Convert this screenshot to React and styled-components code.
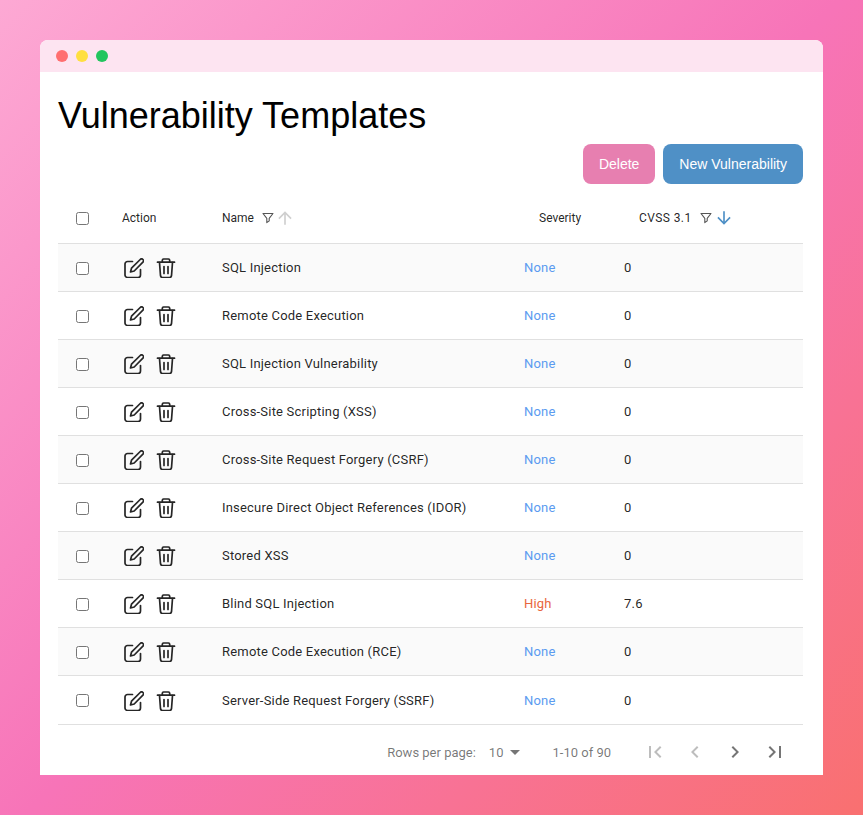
import React from "react";
import styled, { createGlobalStyle } from "styled-components";

const Global = createGlobalStyle`
  html, body { margin: 0; padding: 0; height: 100%; }
  * { box-sizing: border-box; }
`;

const Page = styled.div`
  width: 863px;
  height: 815px;
  padding: 40px;
  overflow: hidden;
  background: linear-gradient(135deg, #fda9d4 0%, #f774b8 50%, #f97070 100%);
  font-family: Roboto, sans-serif;
`;
const Win = styled.div`
  width: 783px;
  height: 735px;
  background: #fff;
  border-radius: 8px 8px 0 0;
  overflow: hidden;
`;
const TitleBar = styled.div`
  height: 32px;
  background: #fde4f1;
  display: flex;
  align-items: center;
  gap: 8px;
  padding-left: 16px;
`;
const Dot = styled.span`
  width: 12px;
  height: 12px;
  border-radius: 50%;
  background: ${(p) => p.$c};
`;
const Content = styled.div`
  padding: 0 20px 0 18px;
`;
const Title = styled.h1`
  margin: 0;
  padding-top: 23px;
  height: 72px;
  font: 400 36px/41px "Liberation Sans", Arial, sans-serif;
  color: #000;
`;
const Actions = styled.div`
  display: flex;
  justify-content: flex-end;
  gap: 8px;
  height: 40px;
`;
const Btn = styled.button`
  height: 40px;
  padding: 0 16px;
  border: 0;
  border-radius: 8px;
  background: ${(p) => p.$bg};
  color: #fff;
  font: 400 14px "Liberation Sans", Arial, sans-serif;
`;
const Row = styled.div`
  display: grid;
  grid-template-columns: 64px 100px 302px 100px 1fr;
  align-items: center;
  height: ${(p) => p.$h || 48}px;
  padding-top: ${(p) => p.$h - 48 || 0}px;
  background: ${(p) => (p.$shade ? "#fafafa" : "#fff")};
  border-bottom: 1px solid #e0e0e0;
  font-size: 13px;
  letter-spacing: 0.2px;
  color: rgba(0, 0, 0, 0.87);
`;
const Head = styled(Row)`
  height: 60px;
  padding-top: 8px;
  letter-spacing: 0;
`;
const HeadCell = styled.div`
  display: flex;
  align-items: center;
  padding-left: ${(p) => p.$pad || 0}px;
  white-space: nowrap;
  font-size: 12px;
  letter-spacing: ${(p) => p.$track || 0}px;
  color: rgba(0, 0, 0, 0.87);
`;
const Box = styled.span`
  display: block;
  width: 13px;
  height: 13px;
  margin-left: 18px;
  margin-top: ${(p) => (p.$flush ? 0 : 2)}px;
  border: 1px solid #767676;
  border-radius: 2.5px;
  background: #fff;
`;
const IconGroup = styled.div`
  display: flex;
  align-items: center;
  gap: 12px;
  padding-left: 2px;
`;
const ActionIcon = styled.svg`
  width: ${(p) => p.$w}px;
  height: 20px;
  fill: none;
  stroke: #262626;
  stroke-width: 1.7;
  stroke-linecap: round;
  stroke-linejoin: round;
`;
const FilterIcon = styled.svg`
  width: 12px;
  height: 12px;
  margin-left: 8px;
  fill: none;
  stroke: #555;
  stroke-width: 1.1;
`;
const SortIcon = styled.svg`
  width: 20px;
  height: 20px;
  margin-left: ${(p) => p.$gap}px;
  fill: ${(p) => p.$c};
`;
const Severity = styled.div`
  color: ${(p) => p.$c};
`;
const Footer = styled.div`
  display: flex;
  align-items: center;
  justify-content: flex-end;
  height: 50px;
  padding-top: 4px;
  font-size: 13px;
  color: rgba(0, 0, 0, 0.54);
`;
const RowsValue = styled.span`
  margin-left: 13px;
`;
const Caret = styled.svg`
  width: 24px;
  height: 24px;
  fill: rgba(0, 0, 0, 0.54);
`;
const Range = styled.span`
  margin-left: 25px;
  margin-right: 32px;
`;
const Pager = styled.div`
  display: flex;
  gap: 16px;
  padding-right: 8px;
  margin-right: 8px;
`;
const PageIcon = styled.svg`
  width: 24px;
  height: 24px;
  fill: ${(p) => (p.$off ? "rgba(0,0,0,0.26)" : "rgba(0,0,0,0.54)")};
`;

const rows = [
  ["SQL Injection", "None", "0"],
  ["Remote Code Execution", "None", "0"],
  ["SQL Injection Vulnerability", "None", "0"],
  ["Cross-Site Scripting (XSS)", "None", "0"],
  ["Cross-Site Request Forgery (CSRF)", "None", "0"],
  ["Insecure Direct Object References (IDOR)", "None", "0"],
  ["Stored XSS", "None", "0"],
  ["Blind SQL Injection", "High", "7.6"],
  ["Remote Code Execution (RCE)", "None", "0"],
  ["Server-Side Request Forgery (SSRF)", "None", "0"],
];

const Filter = () => (
  <FilterIcon viewBox="0 0 12 12">
    <path d="M1 1.5h10L7.2 6.3v2.6L4.8 10.6V6.3z" strokeLinejoin="round" />
  </FilterIcon>
);

const EditIcon = () => (
  <ActionIcon $w={20} viewBox="0 0 20 20">
    <path d="M8.5 3.5H3.5A2.5 2.5 0 0 0 1 6v11a2.5 2.5 0 0 0 2.5 2.5H14a2.5 2.5 0 0 0 2.5-2.5v-5.5" />
    <path d="M6.5 14l1-3.8L16.2 1.5a1.9 1.9 0 0 1 2.7 2.7L10.2 13z" />
  </ActionIcon>
);

const TrashIcon = () => (
  <ActionIcon $w={20} viewBox="0 0 20 20">
    <path d="M1.5 4.2h17" />
    <path d="M6.3 4V2.2A1.3 1.3 0 0 1 7.5 1h5a1.3 1.3 0 0 1 1.2 1.2V4" />
    <path d="M3.5 4.5l1 13.2a2 2 0 0 0 2 1.8h7a2 2 0 0 0 2-1.8l1-13.2" />
    <path d="M8 8.5v7M12 8.5v7" />
  </ActionIcon>
);

export default function App() {
  return (
    <Page>
      <Global />
      <Win>
        <TitleBar>
          <Dot $c="#ff6f70" />
          <Dot $c="#ffdf40" />
          <Dot $c="#22c55e" />
        </TitleBar>
        <Content>
          <Title>Vulnerability Templates</Title>
          <Actions>
            <Btn $bg="#e77fb0">Delete</Btn>
            <Btn $bg="#4f90c6">New Vulnerability</Btn>
          </Actions>
          <Head>
            <Box />
            <HeadCell>Action</HeadCell>
            <HeadCell>
              Name
              <Filter />
              <SortIcon viewBox="0 0 24 24" $c="#cfcfcf" $gap={1}>
                <path d="M4 12l1.41 1.41L11 7.83V20h2V7.83l5.58 5.59L20 12l-8-8-8 8z" />
              </SortIcon>
            </HeadCell>
            <HeadCell $pad={15}>Severity</HeadCell>
            <HeadCell $pad={15} $track={0.4}>
              CVSS 3.1
              <Filter />
              <SortIcon viewBox="0 0 24 24" $c="#4f90c6" $gap={2}>
                <path d="M20 12l-1.41-1.41L13 16.17V4h-2v12.17l-5.58-5.59L4 12l8 8 8-8z" />
              </SortIcon>
            </HeadCell>
          </Head>
          {rows.map(([name, sev, score], i) => (
            <Row key={name} $shade={i % 2 === 0} $h={i === 9 ? 49 : 48}>
              <Box $flush={i === 9} />
              <IconGroup>
                <EditIcon />
                <TrashIcon />
              </IconGroup>
              <div>{name}</div>
              <Severity $c={sev === "High" ? "#e8663d" : "#5b9bf0"}>{sev}</Severity>
              <div>{score}</div>
            </Row>
          ))}
          <Footer>
            <span>Rows per page:</span>
            <RowsValue>10</RowsValue>
            <Caret viewBox="0 0 24 24">
              <path d="M7 10l5 5 5-5z" />
            </Caret>
            <Range>1-10 of 90</Range>
            <Pager>
              <PageIcon viewBox="0 0 24 24" $off>
                <path d="M18.41 16.59L13.82 12l4.59-4.59L17 6l-6 6 6 6zM6 6h2v12H6z" />
              </PageIcon>
              <PageIcon viewBox="0 0 24 24" $off>
                <path d="M15.41 7.41L14 6l-6 6 6 6 1.41-1.41L10.83 12z" />
              </PageIcon>
              <PageIcon viewBox="0 0 24 24">
                <path d="M10 6L8.59 7.41 13.17 12l-4.58 4.59L10 18l6-6z" />
              </PageIcon>
              <PageIcon viewBox="0 0 24 24">
                <path d="M5.59 7.41L10.18 12l-4.59 4.59L7 18l6-6-6-6zM16 6h2v12h-2z" />
              </PageIcon>
            </Pager>
          </Footer>
        </Content>
      </Win>
    </Page>
  );
}
